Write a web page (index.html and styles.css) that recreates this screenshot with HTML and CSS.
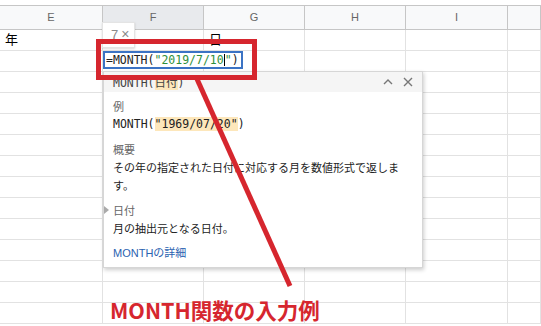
FILE: index.html
```html
<!DOCTYPE html>
<html lang="ja">
<head>
    <meta charset="UTF-8">
    <meta name="viewport" content="width=device-width, initial-scale=1.0">
    <title>MONTH関数の入力例</title>
    <link rel="stylesheet" href="styles.css">
</head>
<body>
    <div class="sheet">
        <div class="grid">
            <div class="hd">E</div>
            <div class="hd hd-active">F</div>
            <div class="hd">G</div>
            <div class="hd">H</div>
            <div class="hd">I</div>
            <div class="hd"></div>

            <div class="cell">年</div><div class="cell"></div><div class="cell">日</div><div class="cell"></div><div class="cell"></div><div class="cell"></div>
            <div class="cell"></div><div class="cell"></div><div class="cell"></div><div class="cell"></div><div class="cell"></div><div class="cell"></div>
            <div class="cell"></div><div class="cell"></div><div class="cell"></div><div class="cell"></div><div class="cell"></div><div class="cell"></div>
            <div class="cell"></div><div class="cell"></div><div class="cell"></div><div class="cell"></div><div class="cell"></div><div class="cell"></div>
            <div class="cell"></div><div class="cell"></div><div class="cell"></div><div class="cell"></div><div class="cell"></div><div class="cell"></div>
            <div class="cell"></div><div class="cell"></div><div class="cell"></div><div class="cell"></div><div class="cell"></div><div class="cell"></div>
            <div class="cell"></div><div class="cell"></div><div class="cell"></div><div class="cell"></div><div class="cell"></div><div class="cell"></div>
            <div class="cell"></div><div class="cell"></div><div class="cell"></div><div class="cell"></div><div class="cell"></div><div class="cell"></div>
            <div class="cell"></div><div class="cell"></div><div class="cell"></div><div class="cell"></div><div class="cell"></div><div class="cell"></div>
            <div class="cell"></div><div class="cell"></div><div class="cell"></div><div class="cell"></div><div class="cell"></div><div class="cell"></div>
            <div class="cell"></div><div class="cell"></div><div class="cell"></div><div class="cell"></div><div class="cell"></div><div class="cell"></div>
            <div class="cell"></div><div class="cell"></div><div class="cell"></div><div class="cell"></div><div class="cell"></div><div class="cell"></div>
            <div class="cell"></div><div class="cell"></div><div class="cell"></div><div class="cell"></div><div class="cell"></div><div class="cell"></div>
            <div class="cell"></div><div class="cell"></div><div class="cell"></div><div class="cell"></div><div class="cell"></div><div class="cell"></div>
        </div>

        <!-- 引数ヒント -->
        <div class="hint"><span>7</span><span class="hint-x">×</span></div>

        <!-- セル編集 -->
        <div class="editor">=MONTH(<span class="str">"2019/7/10<span class="caret"></span>"</span>)</div>

        <!-- 関数ヘルプ -->
        <div class="help">
            <div class="help-head">
                <span>MONTH(<span class="arg">日付</span>)</span>
                <span class="help-icons">
                    <svg width="12" height="12" viewBox="0 0 12 12"><path d="M2 8 L6 4 L10 8" fill="none" stroke="#777" stroke-width="1.4"/></svg>
                    <svg width="12" height="12" viewBox="0 0 12 12"><path d="M2 2 L10 10 M10 2 L2 10" fill="none" stroke="#777" stroke-width="1.4"/></svg>
                </span>
            </div>
            <div class="help-body">
                <div class="label">例</div>
                <div class="mono">MONTH(<span class="arg">"1969/07/20"</span>)</div>

                <div class="label sec">概要</div>
                <div>その年の指定された日付に対応する月を数値形式で返します。</div>

                <div class="label sec arg-name">日付</div>
                <div>月の抽出元となる日付。</div>

                <div class="sec link">MONTHの詳細</div>
            </div>
        </div>

        <!-- 注釈 -->
        <div class="mark-box"></div>
        <svg class="mark-line" width="541" height="326" viewBox="0 0 541 326">
            <line x1="197" y1="79" x2="290" y2="286" stroke="#d6262e" stroke-width="5"/>
        </svg>
        <div class="mark-text">MONTH関数の入力例</div>
    </div>
</body>
</html>
```

FILE: styles.css
```css
body {
    margin: 0;
    font-family: Arial, "Liberation Sans", "Noto Sans CJK JP", sans-serif;
    background-color: #fff;
    overflow: hidden;
}
.sheet {
    position: relative;
    width: 541px;
    height: 326px;
    padding-top: 5px;
    box-sizing: border-box;
    overflow: hidden;
}
.grid {
    display: grid;
    grid-template-columns: 103px 101px 101px 101px 102px 33px;
    grid-template-rows: 25px;
    grid-auto-rows: 21px;
}
.hd {
    box-sizing: border-box;
    background-color: #f8f9fa;
    border-top: 1px solid #c6c6c6;
    border-bottom: 1px solid #c6c6c6;
    border-right: 1px solid #c6c6c6;
    color: #666;
    font-size: 11px;
    text-align: center;
    line-height: 23px;
}
.hd-active {
    background-color: #e8eaed;
}
.cell {
    box-sizing: border-box;
    border-bottom: 1px solid #e2e2e2;
    border-right: 1px solid #e2e2e2;
    font-size: 13px;
    line-height: 20px;
    padding-left: 5px;
    color: #000;
}
.hint {
    position: absolute;
    left: 102px;
    top: 22px;
    width: 33px;
    height: 26px;
    box-sizing: border-box;
    background-color: #fff;
    border: 1px solid #e4e4e4;
    box-shadow: 0 1px 2px rgba(0,0,0,0.15);
    color: #8a8a8a;
    font-size: 13px;
    line-height: 16px;
    padding: 3px 0 0 8px;
}
.hint-x {
    margin-left: 3px;
    font-size: 14px;
}
.editor {
    position: absolute;
    left: 103px;
    top: 51px;
    width: 140px;
    height: 18px;
    box-sizing: border-box;
    background-color: #fff;
    border: 2px solid #3b73c4;
    font-family: "DejaVu Sans Mono", "Liberation Mono", monospace;
    font-size: 11.5px;
    line-height: 14px;
    padding-left: 1px;
    color: #222;
    white-space: nowrap;
}
.str {
    color: #2f8f3a;
}
.caret {
    display: inline-block;
    width: 0;
    height: 12px;
    border-left: 1px solid #000;
    vertical-align: -2px;
}
.help {
    position: absolute;
    left: 103px;
    top: 71px;
    width: 320px;
    height: 197px;
    box-sizing: border-box;
    background-color: #fff;
    border: 1px solid #d6d6d6;
    box-shadow: 1px 2px 4px rgba(0,0,0,0.2);
    font-family: "Noto Sans CJK JP", sans-serif;
    font-size: 11px;
    color: #222;
}
.help-head {
    display: flex;
    justify-content: space-between;
    align-items: center;
    height: 20px;
    padding: 0 9px;
    background-color: #f5f5f5;
    font-family: "DejaVu Sans Mono", "Liberation Mono", "Noto Sans CJK JP", monospace;
    font-size: 11.5px;
    color: #444;
}
.help-icons {
    display: flex;
    gap: 8px;
    margin-right: -1px;
}
.arg {
    background-color: #fde7bb;
}
.help-body {
    padding: 5px 9px 0 9px;
    line-height: 18px;
}
.label {
    color: #666;
}
.mono {
    font-family: "DejaVu Sans Mono", "Liberation Mono", monospace;
    font-size: 11.5px;
}
.sec {
    margin-top: 7px;
}
.arg-name {
    position: relative;
}
.arg-name::before {
    content: "";
    position: absolute;
    left: -9px;
    top: 5px;
    border-left: 5px solid #aaa;
    border-top: 4px solid transparent;
    border-bottom: 4px solid transparent;
}
.link {
    color: #2a62b0;
    font-family: Arial, "Liberation Sans", "Noto Sans CJK JP", sans-serif;
}
.mark-box {
    position: absolute;
    left: 96px;
    top: 39px;
    width: 161px;
    height: 41px;
    box-sizing: border-box;
    border: 5px solid #d6262e;
}
.mark-line {
    position: absolute;
    left: 0;
    top: 0;
}
.mark-text {
    position: absolute;
    left: 110px;
    top: 297px;
    font-family: "Noto Sans CJK JP", sans-serif;
    font-weight: bold;
    font-size: 21.5px;
    line-height: 26px;
    color: #d6262e;
}
```
